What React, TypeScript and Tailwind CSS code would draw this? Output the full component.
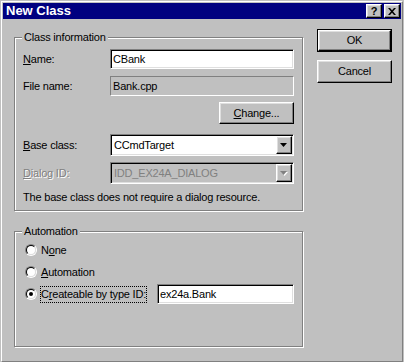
import React from "react";

const raised =
  "border border-t-white border-l-white border-r-black border-b-black shadow-[inset_-1px_-1px_0_#808080,inset_1px_1px_0_#dfdfdf] bg-[#c0c0c0]";
const sunken =
  "border border-t-[#808080] border-l-[#808080] border-r-white border-b-white shadow-[inset_1px_1px_0_#000,inset_-1px_-1px_0_#dfdfdf]";

function Radio({ checked }: { checked?: boolean }) {
  return (
    <span className="w-[12px] h-[12px] shrink-0 rounded-full border border-t-[#808080] border-l-[#808080] border-r-white border-b-white flex">
      <span className="flex-1 rounded-full border border-t-black border-l-black border-r-[#dfdfdf] border-b-[#dfdfdf] bg-white flex items-center justify-center">
        {checked && <span className="w-[4px] h-[4px] rounded-full bg-black" />}
      </span>
    </span>
  );
}

function Arrow({ disabled }: { disabled?: boolean }) {
  return (
    <svg width="8" height="5" viewBox="0 0 8 5">
      {disabled && <path d="M1 1h7L4.5 5z" fill="#ffffff" />}
      <path d="M0 0h7L3.5 4z" fill={disabled ? "#808080" : "#000000"} />
    </svg>
  );
}

function Combo({ text, disabled }: { text: string; disabled?: boolean }) {
  return (
    <div className={`w-[184px] h-[22px] flex p-[1px] ${sunken} ${disabled ? "bg-[#c0c0c0]" : "bg-white"}`}>
      <div className={`flex-1 flex items-center pl-[2px] ${disabled ? "text-[#808080]" : "text-black"}`}>{text}</div>
      <div className={`w-[16px] h-full flex items-center justify-center ${raised}`}>
        <Arrow disabled={disabled} />
      </div>
    </div>
  );
}

function Label({ children, disabled }: { children: React.ReactNode; disabled?: boolean }) {
  return (
    <div
      className={`w-[87px] shrink-0 ${disabled ? "text-[#808080] [text-shadow:1px_1px_0_#fff]" : "text-black"}`}
    >
      {children}
    </div>
  );
}

function Group({ title, className, children }: { title: string; className: string; children: React.ReactNode }) {
  return (
    <div className={`relative border border-[#808080] shadow-[inset_1px_1px_0_#fff,1px_1px_0_#fff] ${className}`}>
      <div className="absolute top-[-7px] left-[7px] px-[2px] bg-[#c0c0c0] leading-[13px]">{title}</div>
      {children}
    </div>
  );
}

function RadioRow({ checked, children }: { checked?: boolean; children: React.ReactNode }) {
  return (
    <div className="h-[20px] flex items-center">
      <Radio checked={checked} />
      <div className="ml-[3px] h-[17px] flex items-center border border-transparent">{children}</div>
    </div>
  );
}

export default function App() {
  return (
    <div className="w-[404px] h-[362px] bg-[#c0c0c0] border-t border-l border-r border-[#c0c0c0] font-['Liberation_Sans',Arial,sans-serif] text-[11px] leading-[13px] tracking-[-0.2px] text-black select-none">
      <div className="h-full flex flex-col border-t border-l border-t-white border-l-white border-r border-b border-r-[#808080] border-b-[#808080]">
        {/* title bar */}
        <div className="mx-[1px] mt-[1px] h-[16px] bg-[#000080] flex items-center pl-[3px] pr-[1px]">
          <span className="text-white font-bold text-[13px] leading-[16px] tracking-normal">New Class</span>
          <div className="ml-auto flex gap-[2px]">
            <div className={`w-[16px] h-[14px] flex items-center justify-center ${raised}`}>
              <span className="font-bold text-[11px] leading-[11px]">?</span>
            </div>
            <div className={`w-[16px] h-[14px] flex items-center justify-center ${raised}`}>
              <svg width="8" height="7" viewBox="0 0 8 7">
                <path d="M0 0h2l2 2.3L6 0h2L5 3.5 8 7H6L4 4.7 2 7H0l3-3.5z" fill="#000" />
              </svg>
            </div>
          </div>
        </div>

        {/* body */}
        <div className="flex-1 flex pl-[12px] pt-[10px] gap-[14px]">
          <div className="w-[289px] pt-[8px] flex flex-col">
            <Group title="Class information" className="h-[174px] pt-[11px] pl-[8px] pr-[8px] flex flex-col">
              <div className="h-[20px] flex items-center">
                <Label>
                  <u>N</u>ame:
                </Label>
                <div className={`w-[184px] h-[20px] bg-white flex items-center pl-[2px] ${sunken}`}>CBank</div>
              </div>
              <div className="mt-[7px] h-[20px] flex items-center">
                <Label>File name:</Label>
                <div className="w-[184px] h-[20px] flex items-center pl-[2px] border border-t-[#808080] border-l-[#808080] border-r-white border-b-white">
                  Bank.cpp
                </div>
              </div>
              <div className="mt-[6px] flex justify-end">
                <div className={`w-[75px] h-[22px] flex items-center justify-center ${raised}`}>
                  <span>
                    <u>C</u>hange...
                  </span>
                </div>
              </div>
              <div className="mt-[10px] h-[22px] flex items-center">
                <Label>
                  <u>B</u>ase class:
                </Label>
                <Combo text="CCmdTarget" />
              </div>
              <div className="mt-[6px] h-[22px] flex items-center">
                <Label disabled>
                  <u>D</u>ialog ID:
                </Label>
                <Combo text="IDD_EX24A_DIALOG" disabled />
              </div>
              <div className="mt-[7px]">The base class does not require a dialog resource.</div>
            </Group>

            <Group title="Automation" className="mt-[20px] h-[116px] pt-[8px] pl-[10px] flex flex-col gap-[2px]">
              <RadioRow>
                <span>
                  N<u>o</u>ne
                </span>
              </RadioRow>
              <RadioRow>
                <span>
                  <u>A</u>utomation
                </span>
              </RadioRow>
              <div className="h-[20px] flex items-center">
                <Radio checked />
                <div className="ml-[3px] w-[107px] h-[17px] flex items-center border border-dotted border-black whitespace-nowrap">
                  <span>
                    C<u>r</u>eateable by type ID:
                  </span>
                </div>
                <div className={`ml-[10px] w-[137px] h-[20px] bg-white flex items-center pl-[2px] ${sunken}`}>
                  ex24a.Bank
                </div>
              </div>
            </Group>
          </div>

          <div className="flex flex-col gap-[8px]">
            <div className="w-[75px] h-[23px] border border-black flex">
              <div className={`flex-1 flex items-center justify-center ${raised}`}>OK</div>
            </div>
            <div className={`w-[75px] h-[23px] flex items-center justify-center ${raised}`}>Cancel</div>
          </div>
        </div>
      </div>
    </div>
  );
}
